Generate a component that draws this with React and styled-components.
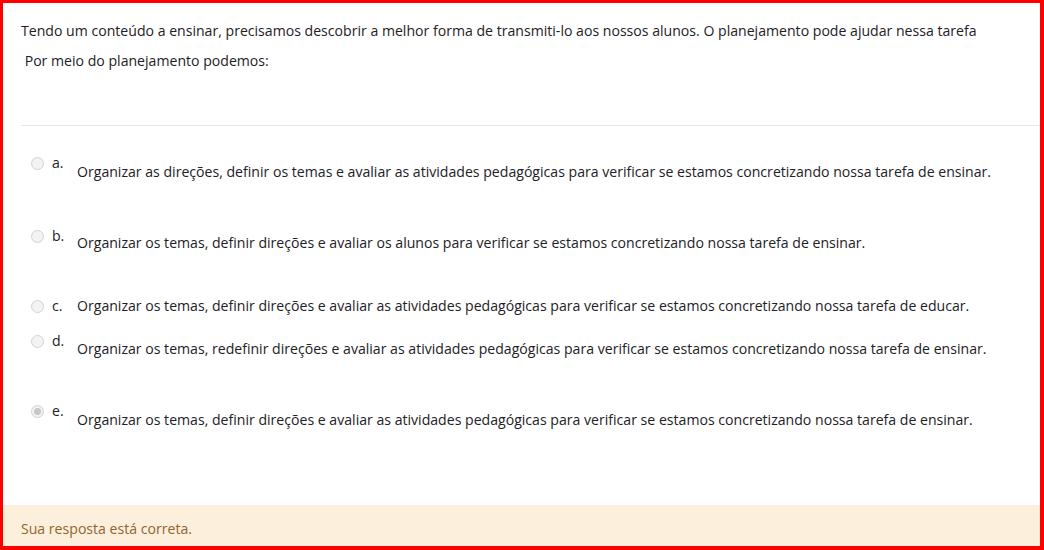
import React from "react";
import styled, { createGlobalStyle } from "styled-components";

const GlobalStyle = createGlobalStyle`
  html, body {
    margin: 0;
    padding: 0;
    background: #ffffff;
  }
  body {
    font-family: "Open Sans", "Liberation Sans", Arial, sans-serif;
    color: #1d2125;
  }
`;

const options = [
  {
    letter: "a.",
    text: "Organizar as direções, definir os temas e avaliar as atividades pedagógicas para verificar se estamos concretizando nossa tarefa de ensinar.",
    drop: 9,
    after: 42,
  },
  {
    letter: "b.",
    text: "Organizar os temas, definir direções e avaliar os alunos para verificar se estamos concretizando nossa tarefa de ensinar.",
    drop: 7,
    after: 41,
  },
  {
    letter: "c.",
    text: "Organizar os temas, definir direções e avaliar as atividades pedagógicas para verificar se estamos concretizando nossa tarefa de educar.",
    drop: 0,
    after: 13,
  },
  {
    letter: "d.",
    text: "Organizar os temas, redefinir direções e avaliar as atividades pedagógicas para verificar se estamos concretizando nossa tarefa de ensinar.",
    drop: 8,
    after: 40,
  },
  {
    letter: "e.",
    text: "Organizar os temas, definir direções e avaliar as atividades pedagógicas para verificar se estamos concretizando nossa tarefa de ensinar.",
    drop: 9,
    after: 0,
    checked: true,
  },
];

const App = () => {
  return (
    <>
      <GlobalStyle />
      <Frame>
        <Question>
          <Prompt>
            <Para>
              Tendo um conteúdo a ensinar, precisamos descobrir a melhor forma
              de transmiti-lo aos nossos alunos. O planejamento pode ajudar
              nessa tarefa
            </Para>
            <Para>&nbsp;Por meio do planejamento podemos:</Para>
          </Prompt>
          <Answers>
            {options.map((o) => (
              <Option key={o.letter} $after={o.after}>
                <Marker>
                  <Radio $checked={o.checked} />
                  <Letter>{o.letter}</Letter>
                </Marker>
                <AnswerText $drop={o.drop}>{o.text}</AnswerText>
              </Option>
            ))}
          </Answers>
        </Question>
        <Feedback>Sua resposta está correta.</Feedback>
      </Frame>
    </>
  );
};

const Frame = styled.div`
  box-sizing: border-box;
  width: 1044px;
  height: 550px;
  border-style: solid;
  border-color: #ff0000;
  border-width: 3px 4px 4px 3px;
  display: flex;
  flex-direction: column;
  font-size: 14.1px;
  line-height: 22px;
`;

const Question = styled.div`
  flex: 1;
  padding: 17px 0 0 18px;
`;

const Prompt = styled.div`
  padding-bottom: 45px;
  border-bottom: 1px solid #e6e6e6;
`;

const Para = styled.p`
  margin: 0 0 8px;
  white-space: pre;
`;

const Answers = styled.div`
  padding-top: 26px;
  padding-left: 8px;
`;

const Option = styled.div`
  display: flex;
  align-items: flex-start;
  margin-bottom: ${(p) => p.$after}px;
`;

const Marker = styled.div`
  display: flex;
  align-items: center;
  width: 52px;
  flex-shrink: 0;
  height: 22px;
`;

const Radio = styled.span`
  box-sizing: border-box;
  width: 13px;
  height: 13px;
  border-radius: 50%;
  border: 1px solid #d2d2d2;
  background: #f3f3f3;
  margin-left: 2px;
  display: flex;
  align-items: center;
  justify-content: center;

  &::after {
    content: "";
    display: ${(p) => (p.$checked ? "block" : "none")};
    width: 7px;
    height: 7px;
    border-radius: 50%;
    background: #c6c6c6;
  }
`;

const Letter = styled.span`
  margin-left: 8px;
`;

const AnswerText = styled.div`
  margin-left: -4px;
  padding-top: ${(p) => p.$drop}px;
  white-space: nowrap;
`;

const Feedback = styled.div`
  background: #fcefdc;
  color: #8e662e;
  height: 41px;
  padding: 13px 18px 0;
  box-sizing: border-box;
  line-height: 22px;
`;

export default App;
